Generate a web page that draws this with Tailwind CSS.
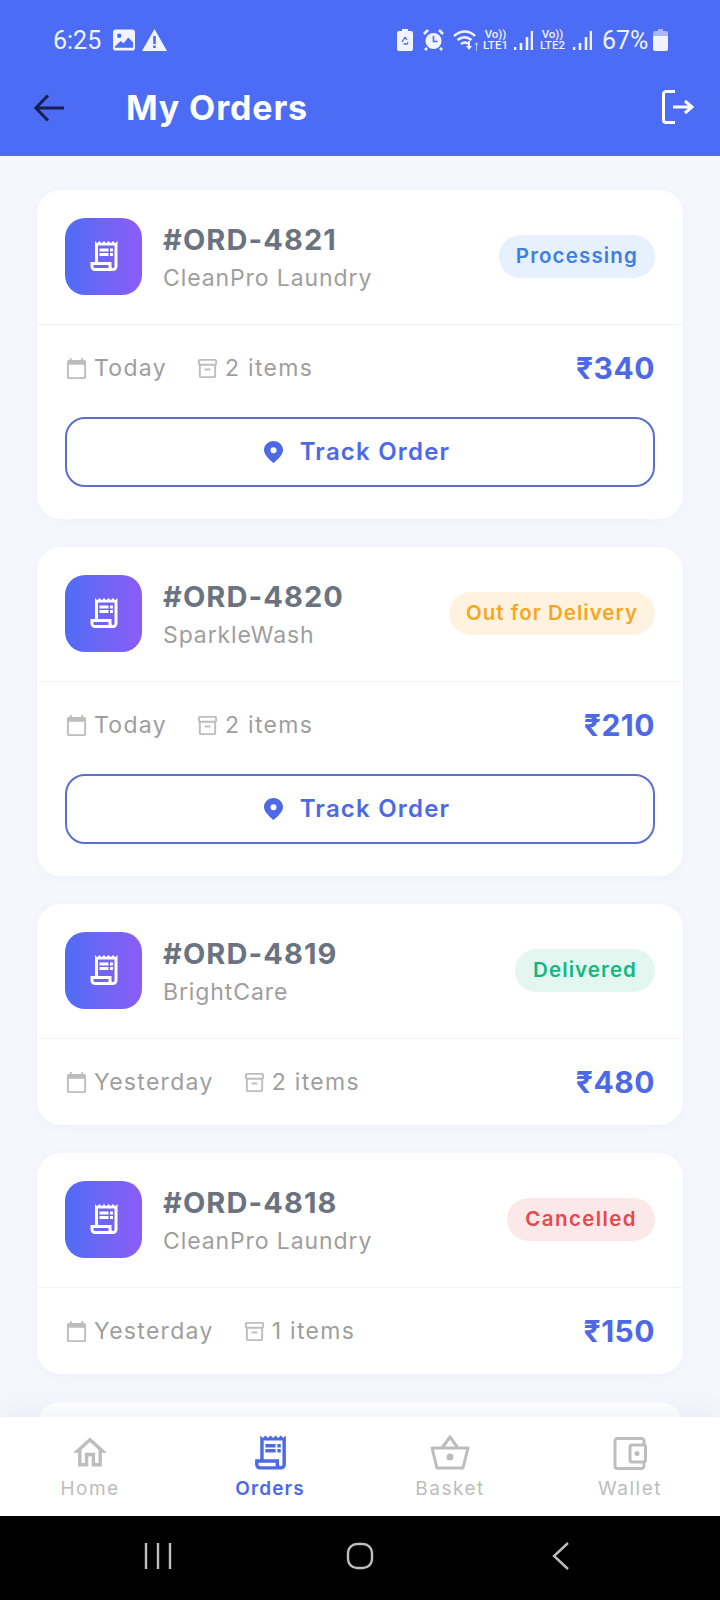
<!DOCTYPE html>
<html lang="en">
<head>
<meta charset="UTF-8">
<meta name="viewport" content="width=device-width, initial-scale=1.0">
<title>My Orders</title>
<script src="https://cdn.jsdelivr.net/npm/@tailwindcss/browser@4"></script>
</head>
<body class="w-[720px] h-[1600px] overflow-hidden bg-[#f5f7fd] font-['Inter',sans-serif]">
<svg class="hidden">
  <symbol id="receipt" viewBox="0 0 24 24"><path fill="currentColor" d="M19.5 3.5 18 2l-1.5 1.5L15 2l-1.5 1.5L12 2l-1.5 1.5L9 2 7.5 3.5 6 2v14H3v3c0 1.66 1.34 3 3 3h12c1.66 0 3-1.34 3-3V2l-1.5 1.5zM15 20H6c-.55 0-1-.45-1-1v-1h10v2zm4-1c0 .55-.45 1-1 1s-1-.45-1-1v-3H8V5h11v14z"/><path fill="currentColor" d="M9 7h6v2H9zm7 0h2v2h-2zm-7 3h6v2H9zm7 0h2v2h-2z"/></symbol>
  <symbol id="calendar" viewBox="0 0 24 24"><path fill="currentColor" d="M20 3h-1V1h-2v2H7V1H5v2H4c-1.1 0-2 .9-2 2v16c0 1.1.9 2 2 2h16c1.1 0 2-.9 2-2V5c0-1.1-.9-2-2-2zm0 18H4V8h16v13z"/></symbol>
  <symbol id="box" viewBox="0 0 24 24"><path fill="currentColor" d="M20 2H4c-1 0-2 .9-2 2v3.01c0 .72.43 1.34 1 1.69V20c0 1.1 1.1 2 2 2h14c.9 0 2-.9 2-2V8.7c.57-.35 1-.97 1-1.69V4c0-1.1-1-2-2-2zm-1 18H5V9h14v11zm1-13H4V4h16v3z"/><path fill="currentColor" d="M9 12h6v2H9z"/></symbol>
  <symbol id="pin" viewBox="0 0 19 22"><path fill="currentColor" fill-rule="evenodd" d="M9.5 0C4.25 0 0 4.1 0 9.2 0 15 9.5 22 9.5 22S19 15 19 9.2C19 4.1 14.75 0 9.5 0zm0 6.2a3 3 0 1 1 0 6 3 3 0 0 1 0-6z"/></symbol>
</svg>

<div class="flex flex-col h-[1600px]">
  <!-- top bar -->
  <header class="h-[156px] shrink-0 bg-[#4d6cf5] text-white">
    <div class="h-[80px] pl-[53px] pr-[52px] flex items-center justify-between">
      <div class="flex items-center font-['Roboto',sans-serif] text-[#f1f3ff]">
        <span class="text-[25px] w-[60px] mt-[1px]">6:25</span>
        <svg class="w-[22px] h-[22px] mr-[7px]" viewBox="0 0 23 22"><rect width="23" height="22" rx="3" fill="#f1f3ff"/><circle cx="6.5" cy="6.5" r="2.3" fill="#4d6cf5"/><path d="M2 18l6-6 3 2.5 5-6 5 5V19H2z" fill="#4d6cf5"/></svg>
        <svg class="w-[25px] h-[22px]" viewBox="0 0 25 22"><path d="M12.5 0 25 22H0z" fill="#f1f3ff"/><rect x="11.2" y="7" width="2.6" height="8" fill="#4d6cf5"/><rect x="11.2" y="16.5" width="2.6" height="2.6" fill="#4d6cf5"/></svg>
      </div>
      <div class="flex items-center font-['Roboto',sans-serif] text-[#f1f3ff]">
        <svg class="w-[16px] h-[22px] mr-[10px]" viewBox="0 0 16 22"><path d="M5 0h6v2h3a2 2 0 0 1 2 2v16a2 2 0 0 1-2 2H2a2 2 0 0 1-2-2V4a2 2 0 0 1 2-2h3z" fill="#f1f3ff"/><path d="M8 8l2 3M11 13l-1 2H6.500M5 13l3-5" stroke="#4d6cf5" stroke-width="1.300" fill="none"/></svg>
        <svg class="w-[21px] h-[22px] mr-[9px]" viewBox="0 0 21 22"><circle cx="10.500" cy="12" r="8" fill="#f1f3ff"/><path d="M10.500 7v5.500h4" stroke="#4d6cf5" stroke-width="1.600" fill="none"/><path d="M1 5l4-4M20 5l-4-4M4 19l-2 2M17 19l2 2" stroke="#f1f3ff" stroke-width="2.600"/></svg>
        <svg class="w-[27px] h-[22px] mr-[2px]" viewBox="0 0 27 22"><path d="M1 7c7-6 15-6 21 0M4.500 11c5-4 9-4 14 0M8 15c3-2 5-2 7 0" stroke="#f1f3ff" stroke-width="2.400" fill="none"/><path d="M15 12h2v5h2l-3 4-3-4h2z" fill="#f1f3ff"/><path d="M23 22v-6h-1.500l2-3 2 3H24v6z" fill="#f1f3ff" opacity=".6"/></svg>
        <div class="w-[27px] flex flex-col items-center text-[11.500px] leading-[11px] font-medium mr-[5px]"><span>Vo))</span><span>LTE1</span></div>
        <svg class="w-[19px] h-[20px] mr-[6px]" viewBox="0 0 19 20"><path d="M1 17v3M7 13v7M13 7v13M18 1v19" stroke="#f1f3ff" stroke-width="2.600"/></svg>
        <div class="w-[27px] flex flex-col items-center text-[11.500px] leading-[11px] font-medium mr-[7px]"><span>Vo))</span><span>LTE2</span></div>
        <svg class="w-[19px] h-[20px] mr-[10px]" viewBox="0 0 19 20"><path d="M1 17v3M7 13v7M13 7v13M18 1v19" stroke="#f1f3ff" stroke-width="2.600"/></svg>
        <span class="text-[25px] w-[51px] mt-[1px]">67%</span>
        <svg class="w-[15px] h-[22px]" viewBox="0 0 15 22"><path d="M5 0h5v2h3a2 2 0 0 1 2 2v3H0V4a2 2 0 0 1 2-2h3z" fill="#a9b8fa"/><path d="M0 7h15v13a2 2 0 0 1-2 2H2a2 2 0 0 1-2-2z" fill="#f1f3ff"/></svg>
      </div>
    </div>
    <div class="h-[76px] pl-[34px] pr-[26px] flex items-start">
      <svg class="w-[30px] h-[28px] mt-[14px] text-[#16204f]" viewBox="0 0 30 28" fill="none" stroke="currentColor" stroke-width="3"><path d="M30 14H2M14 1.500 1.800 14 14 26.500"/></svg>
      <h1 class="ml-[62px] mt-[4px] text-[34px] leading-[48px] font-bold tracking-[0.85px]">My Orders</h1>
      <svg class="ml-auto mt-[10px] w-[32px] h-[34px]" viewBox="0 0 32 34" fill="none" stroke="currentColor" stroke-width="3"><path d="M13 1.500H4A2.500 2.500 0 0 0 1.500 4v26A2.500 2.500 0 0 0 4 32.500h9"/><path d="M11 17h18M23 11l7 6-7 6"/></svg>
    </div>
  </header>

  <!-- orders -->
  <main class="flex-1 overflow-hidden px-[37px] pt-[34px] flex flex-col gap-[28px]">

    <section class="shrink-0 bg-white rounded-[24px] shadow-[0_2px_12px_rgba(80,90,160,0.04)]">
      <div class="h-[135px] px-[28px] pb-[2px] flex items-center border-b border-[#f3f4f6]">
        <div class="w-[77px] h-[77px] rounded-[20px] bg-gradient-to-r from-[#4d6cf5] to-[#8b5cf6] flex items-center justify-center text-white"><svg class="w-[36px] h-[36px]"><use href="#receipt"/></svg></div>
        <div class="ml-[21px] mt-[3px]">
          <div class="text-[29px] leading-[38px] font-bold tracking-[1.1px] text-[#6b7280]">#ORD-4821</div>
          <div class="mt-[2px] text-[23px] leading-[34px] text-[#9e9e9e] tracking-[0.9px]">CleanPro Laundry</div>
        </div>
        <span class="ml-auto h-[43px] px-[17px] rounded-full flex items-center text-[20.500px] font-semibold tracking-[1.15px] bg-[#e7f0fd] text-[#3f7fe0]">Processing</span>
      </div>
      <div class="h-[86px] px-[28px] flex items-center text-[23px] text-[#9e9e9e] tracking-[1.3px]">
        <svg class="w-[23px] h-[23px] text-[#bdbdbd]"><use href="#calendar"/></svg>
        <span class="ml-[6px]">Today</span>
        <svg class="ml-[29px] w-[23px] h-[23px] text-[#bdbdbd]"><use href="#box"/></svg>
        <span class="ml-[6px]">2 items</span>
        <span class="ml-auto text-[30px] font-bold text-[#4d69e5] tracking-[0.5px]">₹340</span>
      </div>
      <button class="mx-[28px] mt-[6px] mb-[32px] w-[590px] h-[70px] pr-[6px] rounded-[20px] border-2 border-[#5a70d0] flex items-center justify-center text-[#4d69e5]">
        <svg class="w-[19px] h-[22px]"><use href="#pin"/></svg>
        <span class="ml-[17px] text-[24px] font-semibold tracking-[1.2px]">Track Order</span>
      </button>
    </section>

    <section class="shrink-0 bg-white rounded-[24px] shadow-[0_2px_12px_rgba(80,90,160,0.04)]">
      <div class="h-[135px] px-[28px] pb-[2px] flex items-center border-b border-[#f3f4f6]">
        <div class="w-[77px] h-[77px] rounded-[20px] bg-gradient-to-r from-[#4d6cf5] to-[#8b5cf6] flex items-center justify-center text-white"><svg class="w-[36px] h-[36px]"><use href="#receipt"/></svg></div>
        <div class="ml-[21px] mt-[3px]">
          <div class="text-[29px] leading-[38px] font-bold tracking-[1.1px] text-[#6b7280]">#ORD-4820</div>
          <div class="mt-[2px] text-[23px] leading-[34px] text-[#9e9e9e] tracking-[0.9px]">SparkleWash</div>
        </div>
        <span class="ml-auto h-[43px] px-[17px] rounded-full flex items-center text-[20.500px] font-semibold tracking-[1px] bg-[#fff3e0] text-[#f5a623]">Out for Delivery</span>
      </div>
      <div class="h-[86px] px-[28px] flex items-center text-[23px] text-[#9e9e9e] tracking-[1.3px]">
        <svg class="w-[23px] h-[23px] text-[#bdbdbd]"><use href="#calendar"/></svg>
        <span class="ml-[6px]">Today</span>
        <svg class="ml-[29px] w-[23px] h-[23px] text-[#bdbdbd]"><use href="#box"/></svg>
        <span class="ml-[6px]">2 items</span>
        <span class="ml-auto text-[30px] font-bold text-[#4d69e5] tracking-[0.5px]">₹210</span>
      </div>
      <button class="mx-[28px] mt-[6px] mb-[32px] w-[590px] h-[70px] pr-[6px] rounded-[20px] border-2 border-[#5a70d0] flex items-center justify-center text-[#4d69e5]">
        <svg class="w-[19px] h-[22px]"><use href="#pin"/></svg>
        <span class="ml-[17px] text-[24px] font-semibold tracking-[1.2px]">Track Order</span>
      </button>
    </section>

    <section class="shrink-0 bg-white rounded-[24px] shadow-[0_2px_12px_rgba(80,90,160,0.04)]">
      <div class="h-[135px] px-[28px] pb-[2px] flex items-center border-b border-[#f3f4f6]">
        <div class="w-[77px] h-[77px] rounded-[20px] bg-gradient-to-r from-[#4d6cf5] to-[#8b5cf6] flex items-center justify-center text-white"><svg class="w-[36px] h-[36px]"><use href="#receipt"/></svg></div>
        <div class="ml-[21px] mt-[3px]">
          <div class="text-[29px] leading-[38px] font-bold tracking-[1.1px] text-[#6b7280]">#ORD-4819</div>
          <div class="mt-[2px] text-[23px] leading-[34px] text-[#9e9e9e] tracking-[0.9px]">BrightCare</div>
        </div>
        <span class="ml-auto h-[43px] px-[18px] rounded-full flex items-center text-[20.500px] font-semibold tracking-[1.1px] bg-[#e3f6ef] text-[#10b981]">Delivered</span>
      </div>
      <div class="h-[86px] px-[28px] flex items-center text-[23px] text-[#9e9e9e] tracking-[1.3px]">
        <svg class="w-[23px] h-[23px] text-[#bdbdbd]"><use href="#calendar"/></svg>
        <span class="ml-[6px]">Yesterday</span>
        <svg class="ml-[29px] w-[23px] h-[23px] text-[#bdbdbd]"><use href="#box"/></svg>
        <span class="ml-[6px]">2 items</span>
        <span class="ml-auto text-[30px] font-bold text-[#4d69e5] tracking-[0.5px]">₹480</span>
      </div>
    </section>

    <section class="shrink-0 bg-white rounded-[24px] shadow-[0_2px_12px_rgba(80,90,160,0.04)]">
      <div class="h-[135px] px-[28px] pb-[2px] flex items-center border-b border-[#f3f4f6]">
        <div class="w-[77px] h-[77px] rounded-[20px] bg-gradient-to-r from-[#4d6cf5] to-[#8b5cf6] flex items-center justify-center text-white"><svg class="w-[36px] h-[36px]"><use href="#receipt"/></svg></div>
        <div class="ml-[21px] mt-[3px]">
          <div class="text-[29px] leading-[38px] font-bold tracking-[1.1px] text-[#6b7280]">#ORD-4818</div>
          <div class="mt-[2px] text-[23px] leading-[34px] text-[#9e9e9e] tracking-[0.9px]">CleanPro Laundry</div>
        </div>
        <span class="ml-auto h-[43px] px-[18px] rounded-full flex items-center text-[20.500px] font-semibold tracking-[1.4px] bg-[#fbe9e9] text-[#e5484d]">Cancelled</span>
      </div>
      <div class="h-[86px] px-[28px] flex items-center text-[23px] text-[#9e9e9e] tracking-[1.3px]">
        <svg class="w-[23px] h-[23px] text-[#bdbdbd]"><use href="#calendar"/></svg>
        <span class="ml-[6px]">Yesterday</span>
        <svg class="ml-[29px] w-[23px] h-[23px] text-[#bdbdbd]"><use href="#box"/></svg>
        <span class="ml-[6px]">1 items</span>
        <span class="ml-auto text-[30px] font-bold text-[#4d69e5] tracking-[0.5px]">₹150</span>
      </div>
    </section>

    <section class="shrink-0 h-[100px] bg-white rounded-[24px]"></section>
  </main>

  <!-- bottom nav -->
  <nav class="relative h-[99px] shrink-0 bg-white grid grid-cols-4 shadow-[0_-6px_24px_rgba(70,80,140,0.07)] text-[19px] leading-[24px] text-[#bdbdbd] tracking-[1.5px]">
    <a class="flex flex-col items-center pt-[20px]">
      <svg class="w-[34px] h-[30px]" viewBox="2 3 20 17"><path fill="currentColor" d="M12 5.690l5 4.500V18h-2v-6H9v6H7v-7.810l5-4.500M12 3L2 12h3v8h6v-6h2v6h6v-8h3L12 3z"/></svg>
      <span class="mt-[10px]">Home</span>
    </a>
    <a class="flex flex-col items-center pt-[15px] text-[#4d69e5] font-semibold tracking-[1.1px]">
      <svg class="w-[41px] h-[41px]"><use href="#receipt"/></svg>
      <span class="mt-[4px]">Orders</span>
    </a>
    <a class="flex flex-col items-center pt-[18px]">
      <svg class="w-[40px] h-[36px]" viewBox="0 0 40 36" fill="none" stroke="currentColor" stroke-width="3"><path d="M2 13h36l-5 20H7z" stroke-linejoin="round"/><path d="M12 13 20 2l8 11"/><circle cx="20" cy="22" r="3.500" fill="currentColor" stroke="none"/></svg>
      <span class="mt-[6px]">Basket</span>
    </a>
    <a class="flex flex-col items-center pt-[20px]">
      <svg class="w-[34px] h-[33px]" viewBox="0 0 34 33" fill="none" stroke="currentColor" stroke-width="3"><path d="M31 8V4a2.500 2.500 0 0 0-2.500-2.500h-24A2.500 2.500 0 0 0 2 4v25a2.500 2.500 0 0 0 2.500 2.500h24A2.500 2.500 0 0 0 31 29v-4"/><rect x="17" y="8" width="15.500" height="17" rx="2"/><circle cx="24" cy="16.500" r="2.500" fill="currentColor" stroke="none"/></svg>
      <span class="mt-[7px]">Wallet</span>
    </a>
  </nav>

  <!-- android buttons -->
  <div class="h-[84px] shrink-0 bg-black text-[#bdbdbd]">
    <div class="w-[720px] flex pt-[26px]">
      <svg class="ml-[144px] w-[28px] h-[28px]" viewBox="0 0 28 28" fill="none" stroke="currentColor" stroke-width="2.400"><path d="M2 1v26M14 1v26M26 1v26"/></svg>
      <svg class="ml-[174px] w-[28px] h-[28px]" viewBox="0 0 28 28" fill="none" stroke="currentColor" stroke-width="2.400"><rect x="2" y="2" width="24" height="24" rx="9"/></svg>
      <svg class="ml-[178px] w-[18px] h-[28px]" viewBox="0 0 18 28" fill="none" stroke="currentColor" stroke-width="2.400"><path d="M16 1 2 14l14 13"/></svg>
    </div>
  </div>
</div>
</body>
</html>
